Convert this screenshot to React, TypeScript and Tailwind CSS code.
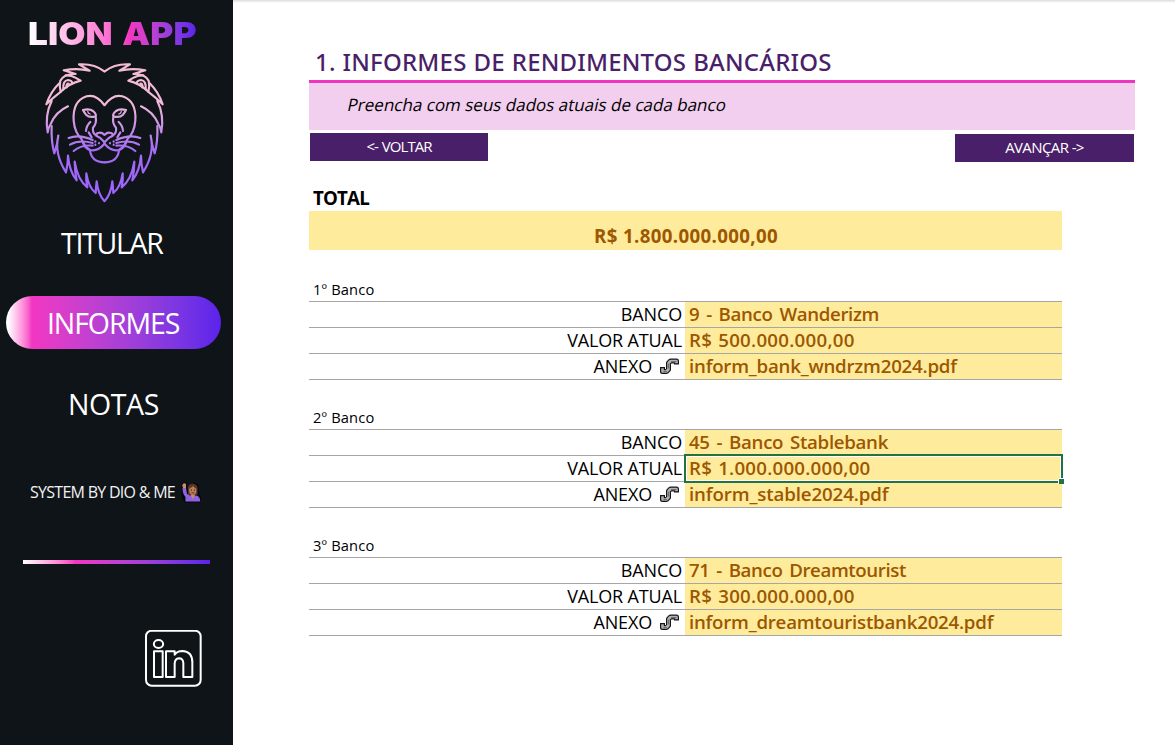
type Row = { label: string; value: string; track: string; clip?: boolean; selected?: boolean };
type Bank = { title: string; rows: Row[] };

const banks: Bank[] = [
  {
    title: "1º Banco",
    rows: [
      { label: "BANCO", value: "9 - Banco Wanderizm", track: "tracking-[-0.35px] [word-spacing:2.3px]" },
      { label: "VALOR ATUAL", value: "R$ 500.000.000,00", track: "tracking-[0.25px] [word-spacing:1px]" },
      { label: "ANEXO", value: "inform_bank_wndrzm2024.pdf", track: "tracking-[-0.22px]", clip: true },
    ],
  },
  {
    title: "2º Banco",
    rows: [
      { label: "BANCO", value: "45 - Banco Stablebank", track: "tracking-[-0.32px] [word-spacing:2.3px]" },
      { label: "VALOR ATUAL", value: "R$ 1.000.000.000,00", track: "tracking-[0.23px] [word-spacing:1px]", selected: true },
      { label: "ANEXO", value: "inform_stable2024.pdf", track: "tracking-[-0.12px]", clip: true },
    ],
  },
  {
    title: "3º Banco",
    rows: [
      { label: "BANCO", value: "71 - Banco Dreamtourist", track: "tracking-[-0.4px] [word-spacing:2.3px]" },
      { label: "VALOR ATUAL", value: "R$ 300.000.000,00", track: "tracking-[0.25px] [word-spacing:1px]" },
      { label: "ANEXO", value: "inform_dreamtouristbank2024.pdf", track: "tracking-[-0.24px]", clip: true },
    ],
  },
];

function LionHalf() {
  return (
    <>
      <path d="M313 214Q282 190 237 193L269 212Q232 203 191 211L227 222Q192 221 181 242Q177 258 182 276" />
      <path d="M178 250Q152 275 139 313Q160 292 180 277Q208 250 242 242L226 233Q214 225 197 226" />
      <path d="M190 268Q188 241 204 240Q216 241 217 250" />
      <path d="M200 262Q198 251 206 251" />
      <path d="M155 303Q134 345 143 397Q144 384 152 372Q168 335 204 319" />
      <path d="M155 378Q153 425 163 460Q172 435 175 407Q162 460 198 517Q204 490 204 467Q208 515 230 541Q224 512 224 485Q233 540 262 562Q257 540 259 520Q266 563 287 579Q288 560 290 544Q294 583 313 603" />
      <path d="M313 315Q288 281 260 289Q217 303 221 362Q224 398 245 418Q252 438 270 450" />
      <path d="M249 330Q268 325 279 333Q290 342 287 349Q268 354 258 344Q252 336 249 330Z" />
      <path d="M263 333Q264 342 271 342" strokeWidth="3.5" />
      <path d="M287 352Q291 370 279 383Q276 400 290 407" />
      <path d="M271 366Q259 377 258 393M266 397L275 412" />
      <path d="M313 404Q306 397 298 398Q288 399 289 407Q302 412 313 426V432Q293 455 270 450Q255 446 249 428" />
      <path d="M270 452Q275 487 313 487" />
      <path d="M206 414Q238 402 278 420M210 434Q238 418 278 429M221 453Q243 434 278 437" />
      <path d="M286 424v1M286 434v1M297 429v1" />
    </>
  );
}

function Lion() {
  return (
    <svg className="block h-[145px] w-[130px]" viewBox="120 180 390 435" fill="none" stroke="url(#lion)" strokeWidth="6.5" strokeLinecap="round" strokeLinejoin="round">
      <defs>
        <linearGradient id="lion" gradientUnits="userSpaceOnUse" x1="0" y1="190" x2="0" y2="605">
          <stop offset="0.05" stopColor="#f4bcd4" />
          <stop offset="0.28" stopColor="#f2bbd8" />
          <stop offset="0.62" stopColor="#a56cf4" />
          <stop offset="1" stopColor="#9a62ff" />
        </linearGradient>
      </defs>
      <LionHalf />
      <g transform="translate(627 0) scale(-1 1)">
        <LionHalf />
      </g>
    </svg>
  );
}

function Woman() {
  return (
    <svg className="h-[21px] w-[21px]" viewBox="0 0 21 21">
      <path d="M0.5 1.5L4 0L6 2V8L8 2.5L12 0.5L17 2.5L18.5 12L20 15V20.5H4L1 16Z" fill="#05070a" />
      <path d="M7 11V5Q8 1.5 11.5 1.5Q16 2 16.5 6V13H7Z" fill="#593527" />
      <path d="M1.2 3L3 1L5 2V6H2Z" fill="#c68f68" />
      <path d="M1.5 6H5L6 12L9 13.5H15Q19 14 19.3 19.5H4.5V15Q1.5 12 1.5 6Z" fill="#9062e2" />
      <path d="M9.5 13H14L12 17Z" fill="#c68f68" />
      <ellipse cx="11.8" cy="8.6" rx="3.6" ry="4.4" fill="#b67d57" />
      <path d="M8 6Q11 6 12 3.5Q13 6 16 6.5V4L12 2L9 3Z" fill="#593527" />
      <path d="M10 8h1M13 8h1" stroke="#2b1a14" />
      <path d="M10.5 10.8h2.8" stroke="#6e2c28" />
    </svg>
  );
}

function Clip() {
  return (
    <svg className="h-[19px] w-[21px]" viewBox="0 0 21 19" fill="none" strokeLinecap="square" strokeLinejoin="round">
      <path d="M3.5 12.5V14.5H7.5L9.5 12.5V6L11.5 4H17.5V5" stroke="#16161a" strokeWidth="5" />
      <path d="M3.5 12.5V14.5H7.5L9.5 12.5V6L11.5 4H17.5V5" stroke="#b5b2ae" strokeWidth="2.6" />
      <path d="M5 14.5H7.5M9.5 11V7M12.5 4.5H17" stroke="#6f6c78" strokeWidth="1" />
      <path d="M7.5 13.2L8.5 12.2M11 5.2L12 4.4" stroke="#e0b552" strokeWidth="0.9" />
    </svg>
  );
}

function LinkedIn() {
  return (
    <svg className="h-[58px] w-[58px]" viewBox="43 46 174 174" fill="none" stroke="#fff" strokeWidth="6" strokeLinejoin="round">
      <rect x="49" y="48" width="164" height="165" rx="17" />
      <ellipse cx="86.5" cy="88" rx="14" ry="12" />
      <path d="M73 110H99V187H73ZM109 110H135V120Q143 109 158 109Q188 110 188 143V187H161V145Q160 131 148 131Q136 132 135 146V187H109Z" />
    </svg>
  );
}

function BankTable({ bank }: { bank: Bank }) {
  return (
    <section className="w-[753px]">
      <h3 className="h-[26px] pl-[4px] text-[14.7px] leading-[29px] tracking-[0.15px] text-black">{bank.title}</h3>
      <div className="border-b border-[#a6a6a6]">
        {bank.rows.map((r) => (
          <div key={r.value} className="flex h-[26px] border-t border-[#a6a6a6]">
            <div className={`flex w-[376px] items-center justify-end text-[18px] leading-[25px] text-black ${r.clip ? "pr-[5px]" : "pr-[3px]"}`}>
              <span className="tracking-[-0.15px]">{r.label}</span>
              {r.clip && <span className="ml-[7px]"><Clip /></span>}
            </div>
            <div className={`relative flex-1 bg-[#ffeb9c] pl-[4px] text-[18.7px] leading-[23px] font-semibold text-[#9c5700] ${r.selected ? "z-10" : ""}`}>
              <span className={`whitespace-nowrap ${r.track}`}>{r.value}</span>
              {r.selected && (
                <div className="absolute -top-[2px] -right-px -bottom-[2px] -left-px border-2 border-[#217346]">
                  <div className="h-full border border-white" />
                  <div className="absolute -right-[3px] -bottom-[3px] h-[6px] w-[6px] border-t border-l border-white bg-[#217346]" />
                </div>
              )}
            </div>
          </div>
        ))}
      </div>
    </section>
  );
}

export default function App() {
  return (
    <div className="flex h-[745px] w-[1175px] overflow-hidden bg-white font-['Open_Sans','Noto_Sans',sans-serif]">
      <aside className="flex w-[233px] shrink-0 flex-col bg-[#0e1418] text-white">
        <div className="flex h-[58px] pt-[14px] pl-[28px]">
          <span className="h-[40px] origin-left scale-x-[1.135] bg-linear-to-r from-white from-[1%] via-[#f236c2] via-[61%] to-[#5b22ea] bg-clip-text font-['Inter',sans-serif] text-[31px] leading-[40px] font-black whitespace-nowrap text-transparent [word-spacing:2.5px]">LION APP</span>
        </div>
        <div className="mt-[2px] ml-[40px]"><Lion /></div>
        <nav className="flex flex-col text-[28.5px]">
          <a className="mt-[12px] h-[53px] pl-[61px] leading-[53px] tracking-[-1.3px]">TITULAR</a>
          <a className="mt-[26px] ml-[6px] h-[53px] w-[215px] rounded-full bg-linear-to-r from-white from-[1%] via-[#f236c2] via-[12%] to-[#5b22ea] pl-[41px] leading-[55px] tracking-[-1.1px]">INFORMES</a>
          <a className="mt-[29px] h-[53px] pl-[68px] leading-[53px] tracking-[-0.4px]">NOTAS</a>
        </nav>
        <div className="mt-[50px] flex h-[22px] items-center pl-[30px]">
          <span className="w-[151px] text-[16px] leading-[22px] tracking-[-0.72px] whitespace-nowrap text-[#f2f2f2]">SYSTEM BY DIO & ME</span>
          <Woman />
        </div>
        <div className="mt-[57px] ml-[23px] h-[4px] w-[187px] bg-linear-to-r from-white via-[#f236c2] via-[28%] to-[#5b22ea]" />
        <div className="mt-[66px] ml-[144px]"><LinkedIn /></div>
      </aside>

      <main className="flex flex-1 flex-col">
        <div className="h-[3px] bg-linear-to-b from-[#dcdcdc] to-white" />
        <div className="flex w-[902px] flex-col pl-[76px]">
          <h1 className="mt-[42px] h-[35px] pl-[6px] font-['Noto_Sans',sans-serif] text-[24px] leading-[33px] font-medium tracking-[0.2px] whitespace-nowrap text-[#4a1f69] [word-spacing:0.5px]">1. INFORMES DE RENDIMENTOS BANCÁRIOS</h1>
          <div className="h-[50px] border-t-[3px] border-[#ee35bf] bg-[#f2ceef] pl-[39px] text-[17px] leading-[43px] text-black">
            <span className="inline-block -skew-x-12">Preencha com seus dados atuais de cada banco</span>
          </div>
          <div className="flex justify-between pt-[3px] pr-px pl-px text-center text-[15px] text-white">
            <button className="h-[28px] w-[178px] bg-[#4a1f69] pb-[2px] leading-[26px] tracking-[-0.95px] [word-spacing:1px]">&lt;- VOLTAR</button>
            <button className="mt-px h-[28px] w-[179px] bg-[#4a1f69] pb-[2px] leading-[26px] tracking-[-0.6px]">AVANÇAR -&gt;</button>
          </div>
          <h2 className="mt-[23px] h-[26px] pl-[4px] text-[18.7px] leading-[25px] font-bold tracking-[-0.8px] text-black">TOTAL</h2>
          <div className="h-[39px] w-[753px] bg-[#ffeb9c] pl-px text-center text-[18.7px] leading-[49px] font-bold tracking-[0.34px] text-[#9c5700]">R$ 1.800.000.000,00</div>
          <div className="mt-[25px] flex flex-col gap-[23px]">
            {banks.map((b) => <BankTable key={b.title} bank={b} />)}
          </div>
        </div>
      </main>
    </div>
  );
}
